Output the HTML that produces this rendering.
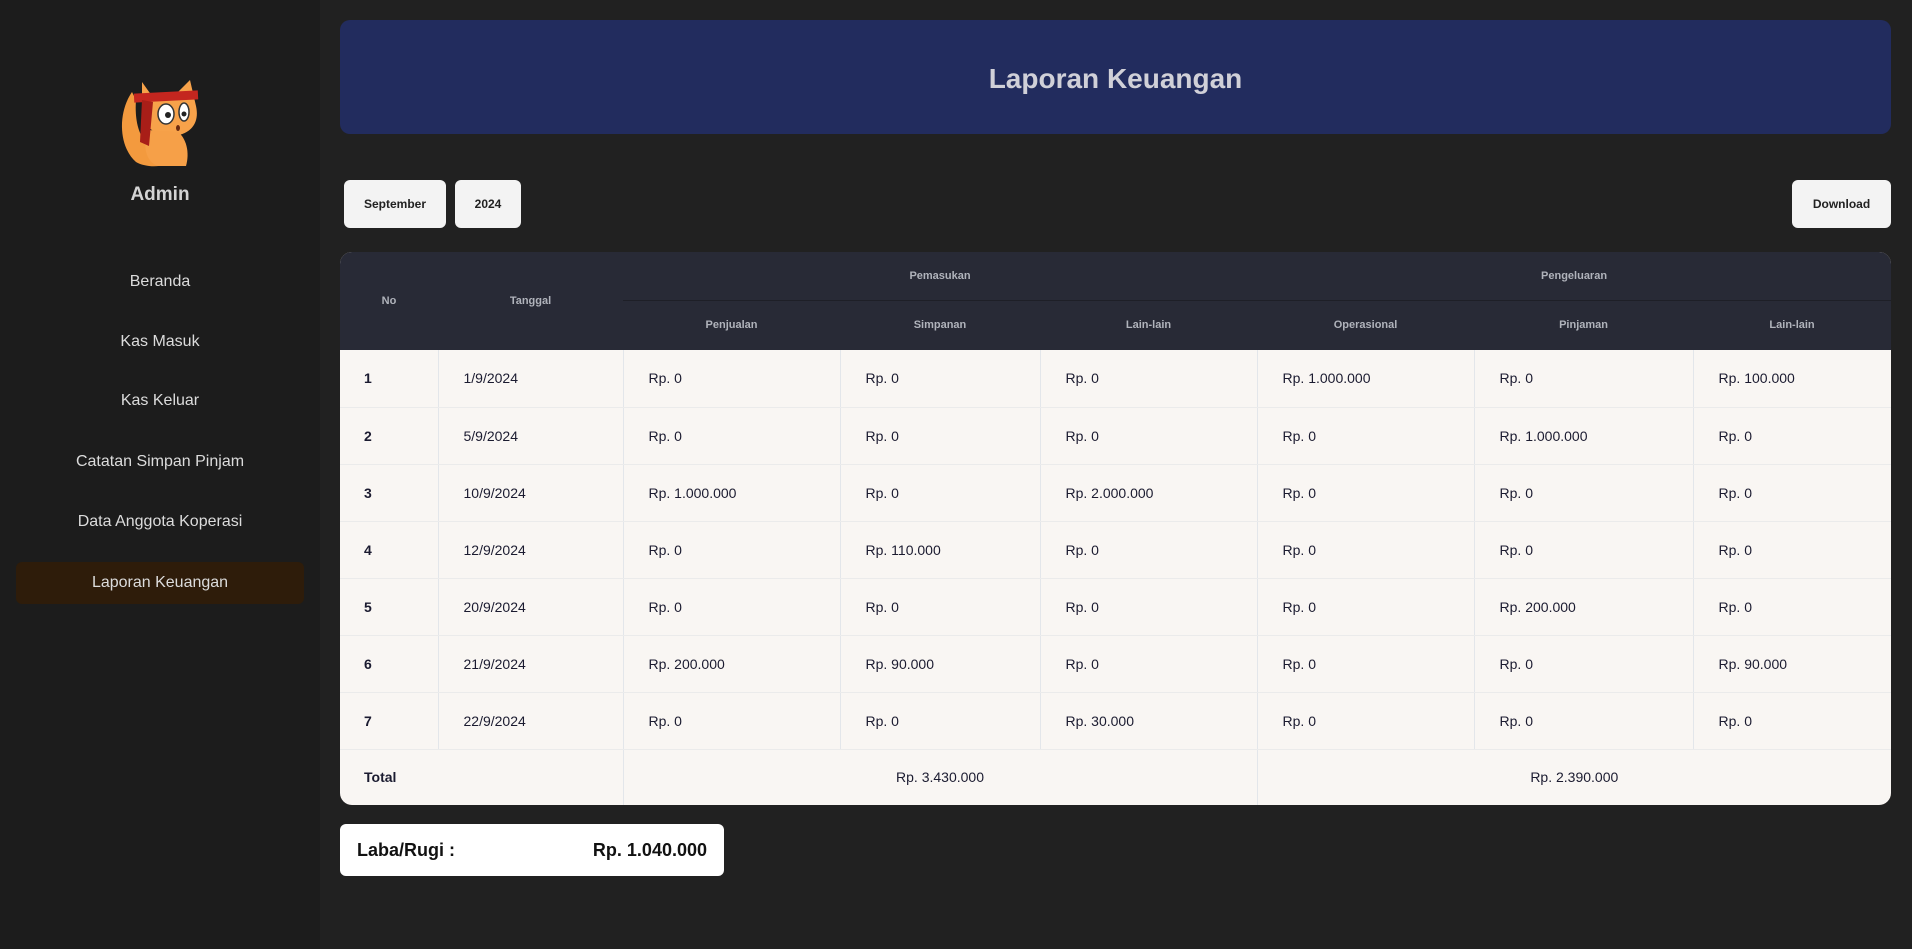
<!DOCTYPE html>
<html><head><meta charset="utf-8"><style>
*{box-sizing:border-box;margin:0;padding:0}
body{width:1912px;height:949px;background:#212121;font-family:"Liberation Sans",sans-serif;position:relative;overflow:hidden}
.side{position:absolute;left:0;top:0;width:320px;height:949px;background:#1c1c1c}
.admin{position:absolute;top:184px;width:320px;text-align:center;color:#d4d4d4;font-weight:bold;font-size:19px}
.nav{position:absolute;width:320px;text-align:center;color:#dcdcdc;font-size:16px}
.active{position:absolute;left:16px;top:562px;width:288px;height:42px;background:#2e1c0a;border-radius:6px}
.hdr{position:absolute;left:340px;top:20px;width:1551px;height:114px;background:#222c5e;border-radius:10px;color:#d0d0d8;font-weight:bold;font-size:28px;text-align:center;line-height:118px}
.btn{position:absolute;top:180px;height:48px;background:#f3f3f3;border-radius:6px;font-weight:bold;font-size:12px;color:#222;text-align:center;line-height:48px}
.tw{position:absolute;left:340px;top:252px;width:1551px;height:553px;border-radius:12px;overflow:hidden;background:#f9f6f3}
table{border-collapse:collapse;width:1551px;table-layout:fixed}
th{background:#282a36;color:#b0b3bb;font-size:11px;font-weight:bold;text-align:center}
tr.h1 th{height:48px}tr.h2 th{height:50px}
tr.h1 th.g{border-bottom:1px solid #1e1f27}
td{height:57px;border-right:1px solid #e3e6ea;border-bottom:1px solid #ebebeb;font-size:14px;color:#1b1b30;padding-left:25px}
td:last-child{border-right:none}
td.n{font-weight:bold;padding-left:24px}
tr.t td{height:56px;border-bottom:none}
.lr{position:absolute;left:340px;top:824px;width:384px;height:52px;background:#fff;border-radius:6px;font-weight:bold;font-size:18px;color:#111;line-height:52px;padding:0 17px}
</style></head><body>
<div class="side">
<svg style="position:absolute;left:114px;top:76px" width="92" height="92" viewBox="0 0 92 92">
<path d="M18 16 C4 36 4 70 22 86 C32 92 52 92 58 84 L42 70 C28 70 20 50 22 24 Z" fill="#f39a3e"/>
<path d="M28 6 L38 20 L62 18 L76 4 L82 30 C86 48 76 58 60 60 C44 62 30 52 28 36 Z" fill="#f7a24a"/>
<path d="M34 54 C28 70 32 86 44 90 L72 90 C76 76 72 62 64 56 Z" fill="#f6a048"/>
<rect x="20" y="16" width="64" height="9" fill="#c4261f" transform="rotate(-3 52 20)"/>
<path d="M28 24 L26 66 L35 70 L39 26 Z" fill="#a81e18"/>
<ellipse cx="52" cy="38" rx="8" ry="10" fill="#fff" stroke="#333" stroke-width="1.5"/>
<ellipse cx="70" cy="36" rx="5" ry="9" fill="#fff" stroke="#333" stroke-width="1.5"/>
<circle cx="54" cy="39" r="3" fill="#222"/><circle cx="70" cy="38" r="2.5" fill="#222"/>
<ellipse cx="64" cy="52" rx="2" ry="3" fill="#6a2a10"/>
</svg>
<div class="admin">Admin</div>
<div class="active"></div>
<div class="nav" style="top:273px">Beranda</div>
<div class="nav" style="top:333px">Kas Masuk</div>
<div class="nav" style="top:392px">Kas Keluar</div>
<div class="nav" style="top:453px">Catatan Simpan Pinjam</div>
<div class="nav" style="top:513px">Data Anggota Koperasi</div>
<div class="nav" style="top:574px">Laporan Keuangan</div>
</div>
<div class="hdr">Laporan Keuangan</div>
<div class="btn" style="left:344px;width:102px">September</div>
<div class="btn" style="left:455px;width:66px">2024</div>
<div class="btn" style="left:1792px;width:99px">Download</div>
<div class="tw"><table>
<colgroup><col style="width:98px"><col style="width:185px"><col style="width:217px"><col style="width:200px"><col style="width:217px"><col style="width:217px"><col style="width:219px"><col style="width:198px"></colgroup>
<tr class="h1"><th rowspan="2">No</th><th rowspan="2">Tanggal</th><th colspan="3" class="g">Pemasukan</th><th colspan="3" class="g">Pengeluaran</th></tr>
<tr class="h2"><th>Penjualan</th><th>Simpanan</th><th>Lain-lain</th><th>Operasional</th><th>Pinjaman</th><th>Lain-lain</th></tr>
<tr><td class="n">1</td><td>1/9/2024</td><td>Rp. 0</td><td>Rp. 0</td><td>Rp. 0</td><td>Rp. 1.000.000</td><td>Rp. 0</td><td>Rp. 100.000</td></tr>
<tr><td class="n">2</td><td>5/9/2024</td><td>Rp. 0</td><td>Rp. 0</td><td>Rp. 0</td><td>Rp. 0</td><td>Rp. 1.000.000</td><td>Rp. 0</td></tr>
<tr><td class="n">3</td><td>10/9/2024</td><td>Rp. 1.000.000</td><td>Rp. 0</td><td>Rp. 2.000.000</td><td>Rp. 0</td><td>Rp. 0</td><td>Rp. 0</td></tr>
<tr><td class="n">4</td><td>12/9/2024</td><td>Rp. 0</td><td>Rp. 110.000</td><td>Rp. 0</td><td>Rp. 0</td><td>Rp. 0</td><td>Rp. 0</td></tr>
<tr><td class="n">5</td><td>20/9/2024</td><td>Rp. 0</td><td>Rp. 0</td><td>Rp. 0</td><td>Rp. 0</td><td>Rp. 200.000</td><td>Rp. 0</td></tr>
<tr><td class="n">6</td><td>21/9/2024</td><td>Rp. 200.000</td><td>Rp. 90.000</td><td>Rp. 0</td><td>Rp. 0</td><td>Rp. 0</td><td>Rp. 90.000</td></tr>
<tr><td class="n">7</td><td>22/9/2024</td><td>Rp. 0</td><td>Rp. 0</td><td>Rp. 30.000</td><td>Rp. 0</td><td>Rp. 0</td><td>Rp. 0</td></tr>
<tr class="t"><td class="n" colspan="2">Total</td><td colspan="3" style="text-align:center;padding:0">Rp. 3.430.000</td><td colspan="3" style="text-align:center;padding:0">Rp. 2.390.000</td></tr>
</table></div>
<div class="lr">Laba/Rugi :<span style="float:right">Rp. 1.040.000</span></div>
</body></html>
